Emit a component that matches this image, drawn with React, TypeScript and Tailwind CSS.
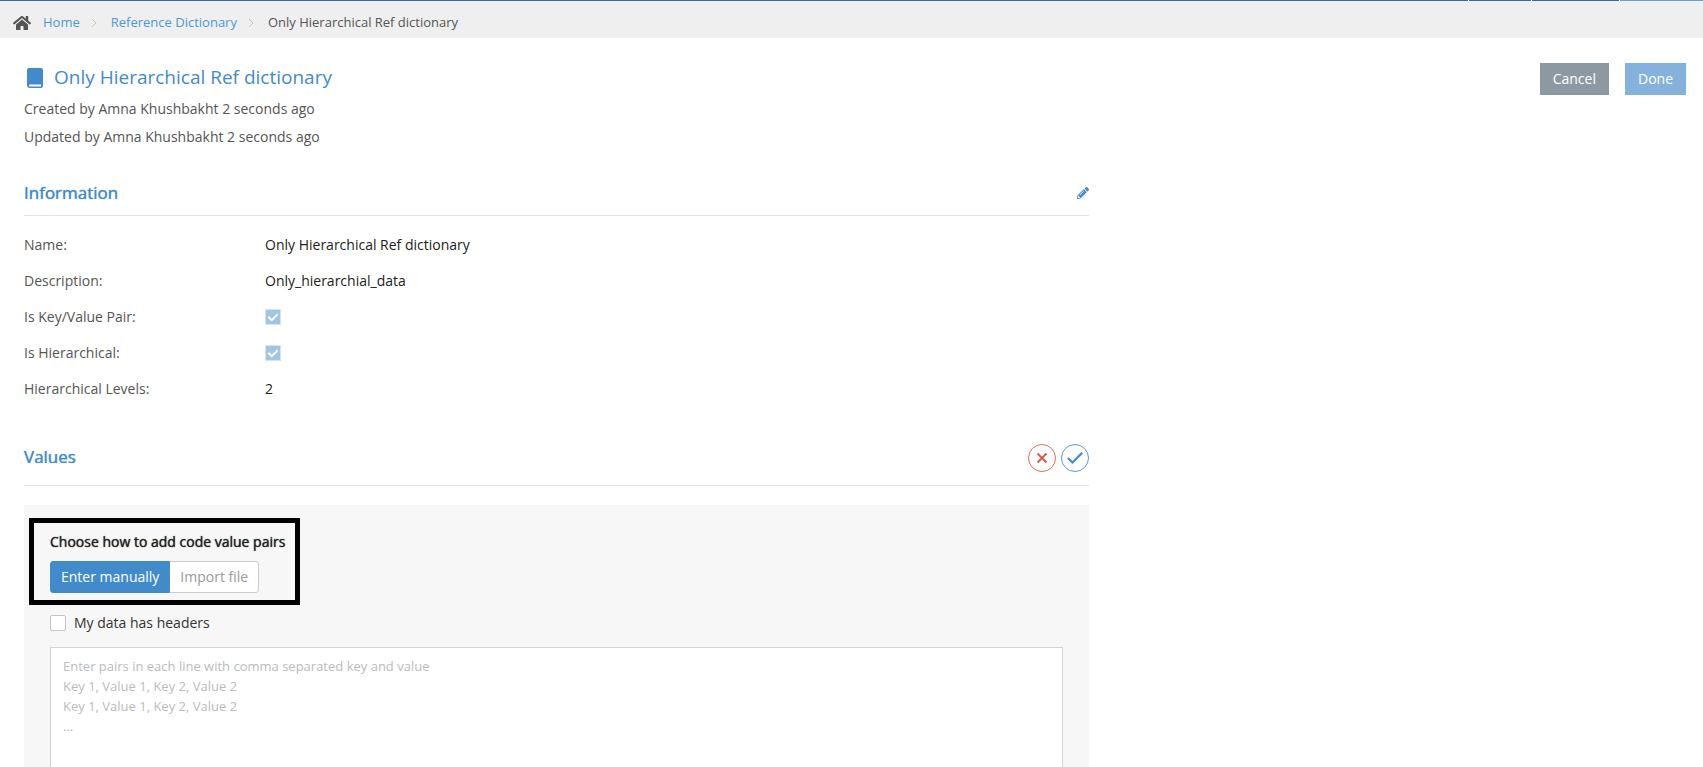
import { ReactNode, useState } from 'react';
import { FaHome, FaPencilAlt } from 'react-icons/fa';

const crumbs = ['Home', 'Reference Dictionary'];

const placeholder = [
  'Enter pairs in each line with comma separated key and value',
  'Key 1, Value 1, Key 2, Value 2',
  'Key 1, Value 1, Key 2, Value 2',
  '...',
].join('\n');

const BookIcon = () => (
  <svg viewBox="0 0 18 20" className="h-5 w-[18px] shrink-0" fill="#428bca" aria-hidden="true">
    <path
      fillRule="evenodd"
      d="M3 0h12a2 2 0 0 1 2 2v16a2 2 0 0 1-2 2H4a3 3 0 0 1-3-3V2a2 2 0 0 1 2-2ZM4 16.500a1 1 0 0 0 0 2h10.500a.6.6 0 0 0 .6-.6v-1.400Z"
    />
  </svg>
);

const Chevron = () => (
  <svg viewBox="0 0 6 10" className="h-2.5 w-1.5" fill="none" stroke="#c4c4c4" aria-hidden="true">
    <path d="M1 1l4 4-4 4" />
  </svg>
);

const InfoCheckbox = ({ id }: { id: string }) => (
  <span className="relative flex">
    <input
      id={id}
      type="checkbox"
      checked
      disabled
      readOnly
      className="size-4 appearance-none border border-[#d9e4ee] bg-[#a0c5e5]"
    />
    <svg viewBox="0 0 16 16" className="pointer-events-none absolute inset-0 size-4" fill="none" stroke="#fff" strokeWidth="2" aria-hidden="true">
      <path d="M3.300 7.800l3.400 3.400 6-6" />
    </svg>
  </span>
);

const InfoRow = ({ label, htmlFor, children }: { label: string; htmlFor?: string; children: ReactNode }) => (
  <div className="flex h-9 items-center">
    {htmlFor ? (
      <label htmlFor={htmlFor} className="w-[241px] text-[#555]">{label}</label>
    ) : (
      <span className="w-[241px] text-[#555]">{label}</span>
    )}
    <div className="text-[#222]">{children}</div>
  </div>
);

export default function App() {
  const [mode, setMode] = useState<'manual' | 'import'>('manual');
  const [hasHeaders, setHasHeaders] = useState(false);

  return (
    <div className="flex h-screen flex-col overflow-hidden bg-white font-['Open_Sans',sans-serif] text-sm text-[#555]">
      <div className="flex h-px shrink-0 gap-px">
        <div className="flex-1 bg-[#2f6ca3]" />
        <div className="w-[62px] bg-[#2f6ca3]" />
        <div className="w-[87px] bg-[#2f6ca3]" />
        <div className="w-[83px] bg-[#5ca5d3]" />
      </div>

      <nav className="flex h-[37px] shrink-0 items-center bg-[#efefef] pt-1.5 pl-[13px] text-[13px]">
        <FaHome className="mr-3 size-[18px] text-[#555]" />
        {crumbs.map((crumb) => (
          <span key={crumb} className="flex items-center">
            <a href="#" className="text-[#4a9ad4]">{crumb}</a>
            <span className="mr-[14px] ml-[11px]"><Chevron /></span>
          </span>
        ))}
        <span>Only Hierarchical Ref dictionary</span>
      </nav>

      <main className="pt-[25px] pr-[17px] pl-6">
        <header className="flex items-start justify-between">
          <div>
            <h1 className="flex h-[30px] items-center gap-2.5 pl-0.5 text-[19px] text-[#428bca]">
              <BookIcon />
              Only Hierarchical Ref dictionary
            </h1>
            <p className="mt-0.5 leading-7">Created by Amna Khushbakht 2 seconds ago</p>
            <p className="leading-7">Updated by Amna Khushbakht 2 seconds ago</p>
          </div>
          <div className="flex gap-4 text-white">
            <button type="button" className="h-8 bg-[#8d99a2] px-[13px]">Cancel</button>
            <button type="button" className="h-8 bg-[#84b2dc] px-[13px]">Done</button>
          </div>
        </header>

        <div className="max-w-[1065px]">
          <section>
            <div className="mt-6 flex h-[41px] items-center justify-between border-b border-[#e4e4e4] pb-1">
              <h2 className="text-[17px] text-[#428bca] [text-shadow:0_0_1px]">Information</h2>
              <button type="button" aria-label="Edit information">
                <FaPencilAlt className="size-3 text-[#428bca]" />
              </button>
            </div>
            <div className="pt-[11px]">
              <InfoRow label="Name:">Only Hierarchical Ref dictionary</InfoRow>
              <InfoRow label="Description:">Only_hierarchial_data</InfoRow>
              <InfoRow label="Is Key/Value Pair:" htmlFor="key-value">
                <InfoCheckbox id="key-value" />
              </InfoRow>
              <InfoRow label="Is Hierarchical:" htmlFor="hierarchical">
                <InfoCheckbox id="hierarchical" />
              </InfoRow>
              <InfoRow label="Hierarchical Levels:">2</InfoRow>
            </div>
          </section>

          <section>
            <div className="mt-[37px] flex h-[42px] items-start justify-between border-b border-[#e4e4e4]">
              <h2 className="text-[17px] leading-[26px] text-[#428bca] [text-shadow:0_0_1px]">Values</h2>
              <div className="flex gap-[5px]">
                <button
                  type="button"
                  aria-label="Discard values"
                  className="flex size-7 items-center justify-center rounded-full border border-[#dc6f60] text-[#d25b47]"
                >
                  <svg viewBox="0 0 12 12" className="size-3" stroke="currentColor" strokeWidth="1.800" aria-hidden="true">
                    <path d="M1.500 1.500l9 9M10.500 1.500l-9 9" />
                  </svg>
                </button>
                <button
                  type="button"
                  aria-label="Save values"
                  className="flex size-7 items-center justify-center rounded-full border border-[#5a9ad2] text-[#428bca]"
                >
                  <svg viewBox="0 0 16 12" className="h-3 w-4" fill="none" stroke="currentColor" strokeWidth="2.200" aria-hidden="true">
                    <path d="M.8 6l4.700 4.500L15.200.8" />
                  </svg>
                </button>
              </div>
            </div>

            <div className="mt-[19px] bg-[#f7f7f7] pt-[13px] pb-6">
              <div className="ml-[5px] w-fit border-5 border-black pt-[5px] pr-2.5 pb-[7px] pl-4">
                <p className="mb-[5px] leading-7 text-[#222] [text-shadow:0_0_1px]">Choose how to add code value pairs</p>
                <div className="flex">
                  <button
                    type="button"
                    onClick={() => setMode('manual')}
                    className={`h-8 rounded-l-[3px] border px-2.5 ${
                      mode === 'manual' ? 'z-10 border-[#428bca] bg-[#428bca] text-white' : 'border-[#ccc] bg-white text-[#999]'
                    }`}
                  >
                    Enter manually
                  </button>
                  <button
                    type="button"
                    onClick={() => setMode('import')}
                    className={`-ml-px h-8 rounded-r-[3px] border px-2.5 ${
                      mode === 'import' ? 'z-10 border-[#428bca] bg-[#428bca] text-white' : 'border-[#ccc] bg-white text-[#999]'
                    }`}
                  >
                    Import file
                  </button>
                </div>
              </div>

              <div className="px-[26px]">
                <label className="mt-2 flex h-5 w-fit items-center gap-2 text-[#333]">
                  <input
                    type="checkbox"
                    checked={hasHeaders}
                    onChange={(e) => setHasHeaders(e.target.checked)}
                    className="size-4 appearance-none rounded-[2px] border border-[#c4c4c4] bg-white checked:bg-[#428bca]"
                  />
                  My data has headers
                </label>
                <textarea
                  aria-label="Code value pairs"
                  placeholder={placeholder}
                  rows={10}
                  className="mt-3.5 block w-full resize-none border border-[#d4d4d4] bg-white px-3 py-2 text-[13px] leading-5 outline-none placeholder:text-[#bbb]"
                />
              </div>
            </div>
          </section>
        </div>
      </main>
    </div>
  );
}
